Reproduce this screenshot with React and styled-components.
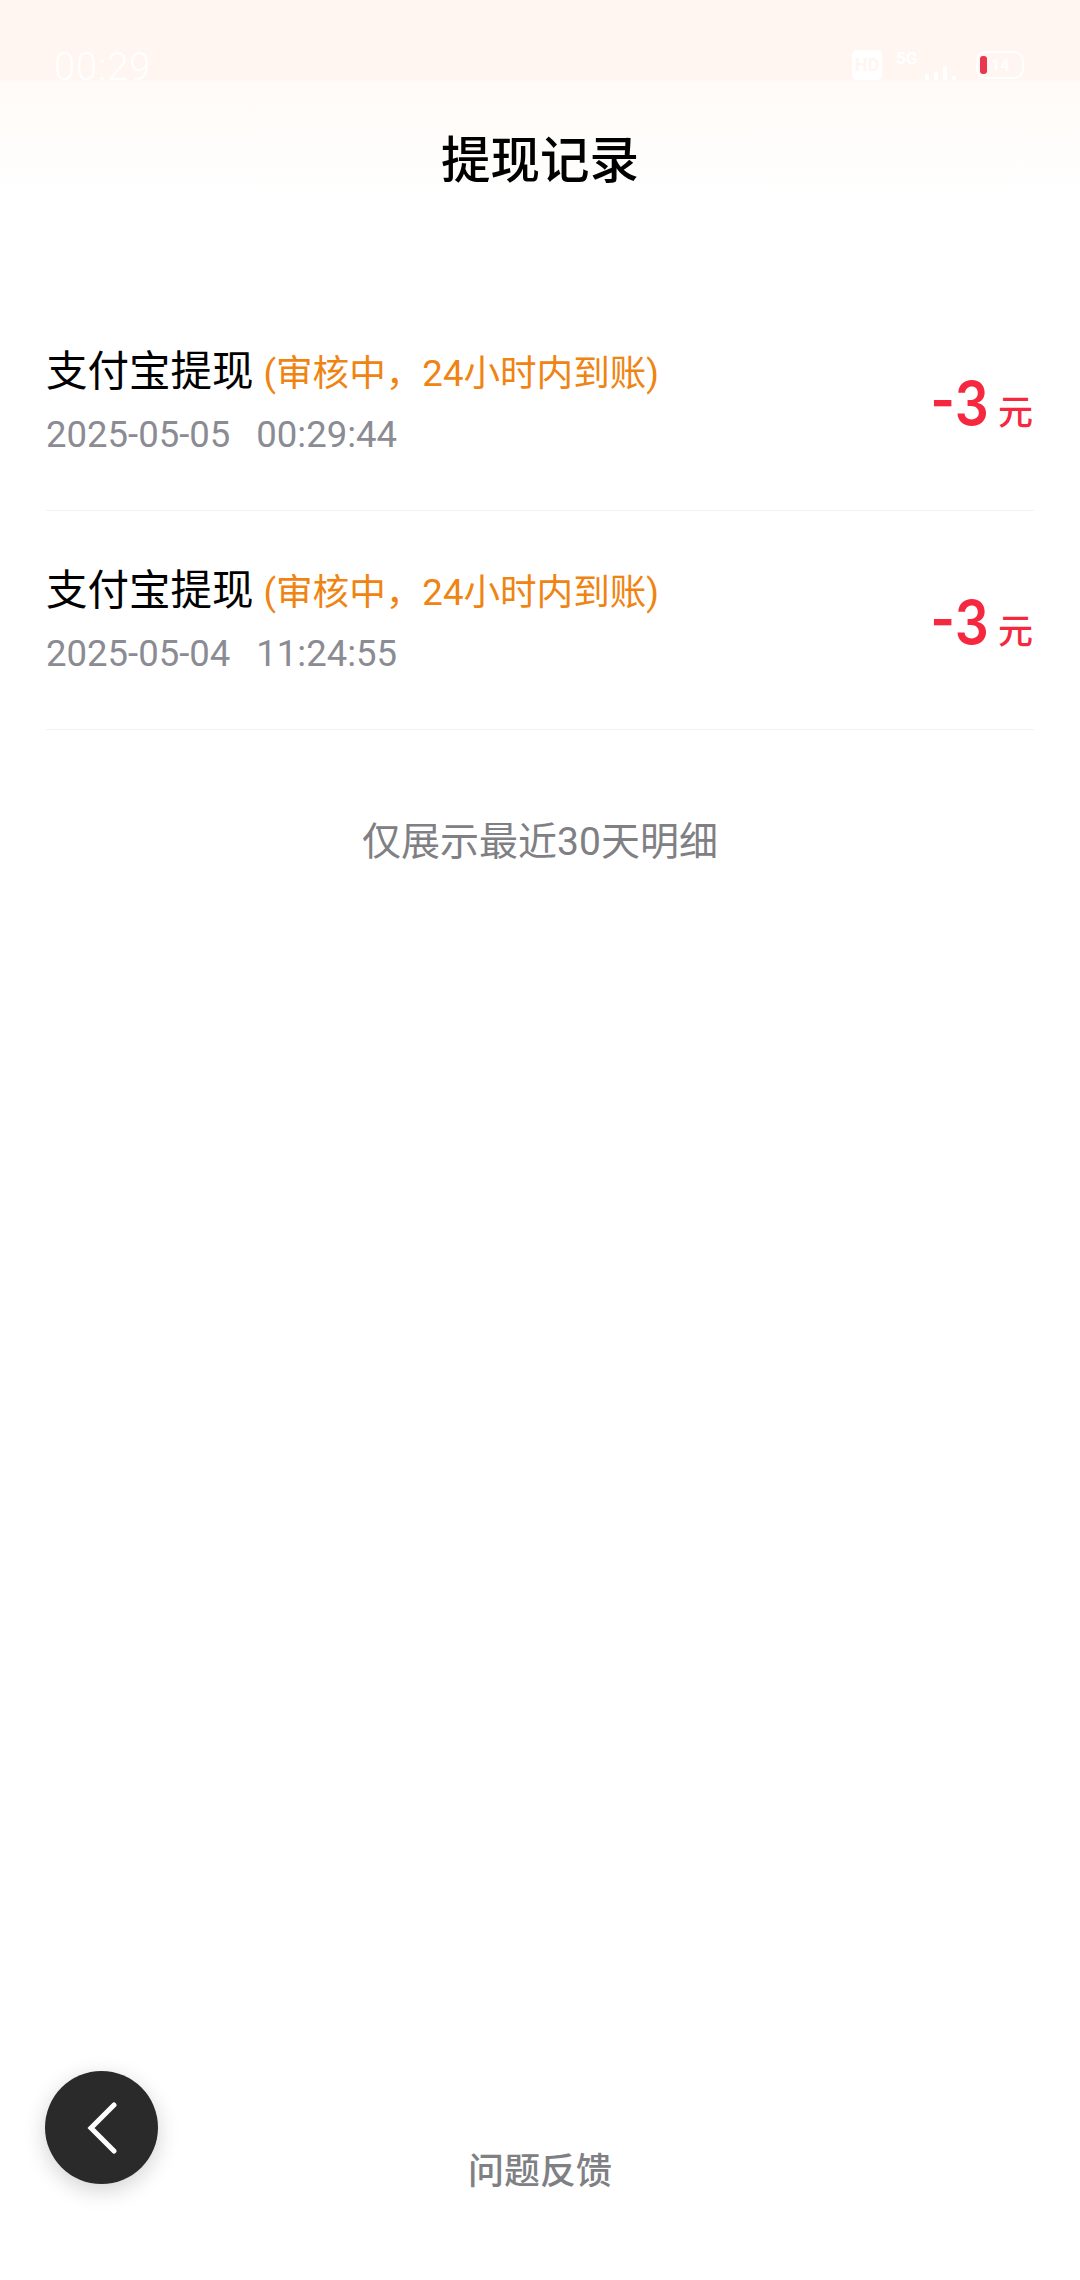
import React from 'react'
import styled, { createGlobalStyle } from 'styled-components'

const cjk = `Roboto, "Noto Sans CJK SC", sans-serif`

const GlobalStyle = createGlobalStyle`
  html, body {
    margin: 0;
    padding: 0;
    background: #fff;
  }
  body {
    font-family: ${cjk};
  }
`

const Page = styled.div`
  width: 1080px;
  height: 2280px;
  display: flex;
  flex-direction: column;
  position: relative;
  overflow: hidden;
  background: #fff;
`

const Header = styled.header`
  height: 200px;
  background: linear-gradient(180deg, #fff5f1 0%, #fff6f2 40%, #fffaf7 41%, #ffffff 100%);
  display: flex;
  flex-direction: column;
`

const StatusBar = styled.div`
  height: 80px;
  padding: 47px 56px 0 54px;
  box-sizing: border-box;
  display: flex;
  justify-content: space-between;
  align-items: flex-start;
  color: #fff;
`

const Clock = styled.span`
  font-size: 38px;
  font-weight: 300;
  line-height: 40px;
  letter-spacing: 1px;
`

const StatusIcons = styled.div`
  display: flex;
  align-items: center;
  gap: 12px;
  margin-top: 3px;
  margin-right: 0;
`

const HdBadge = styled.span`
  width: 30px;
  height: 30px;
  border-radius: 5px;
  background: #fff;
  color: #fff5f1;
  font-size: 18px;
  font-weight: 700;
  line-height: 30px;
  text-align: center;
`

const Signal = styled.div`
  width: 62px;
  height: 30px;
  position: relative;
  display: flex;
  gap: 5px;
  align-items: flex-end;
  justify-content: flex-end;
`

const NetLabel = styled.span`
  position: absolute;
  left: 2px;
  top: 0;
  font-size: 17px;
  line-height: 17px;
  font-weight: 700;
  color: #fff;
`

const Bar = styled.i`
  width: 4px;
  height: ${({ h }) => h}px;
  background: #fff;
`

const Battery = styled.div`
  width: 48px;
  height: 28px;
  margin-left: 8px;
  border: 2px solid #fff;
  border-radius: 10px;
  box-sizing: border-box;
  display: flex;
  align-items: center;
  gap: 4px;
  padding-left: 2px;
  color: #fff;
  font-size: 16px;
  font-weight: 700;
`

const BatteryLevel = styled.i`
  width: 7px;
  height: 18px;
  border-radius: 3px;
  background: #e8384f;
`

const Title = styled.h1`
  margin: 43px 0 0;
  height: 77px;
  font-size: 49.5px;
  font-weight: 500;
  line-height: 77px;
  text-align: center;
  color: #000;
`

const List = styled.main`
  margin: 0 46px;
  padding-top: 92px;
`

const Row = styled.div`
  height: 219px;
  box-sizing: border-box;
  border-bottom: 1px solid #f1f1f3;
  display: flex;
  align-items: center;
  justify-content: space-between;
`

const RowText = styled.div`
  display: flex;
  flex-direction: column;
  gap: 13px;
`

const RowTitle = styled.div`
  font-size: 41.5px;
  line-height: 52px;
  color: #000;
  white-space: nowrap;
`

const Status = styled.span`
  font-size: 36.6px;
  color: #ef8412;
  margin-left: 10px;
`

const RowDate = styled.div`
  font-size: 36.5px;
  line-height: 44px;
  color: #8a8b93;
  word-spacing: 17px;
`

const Amount = styled.div`
  display: flex;
  align-items: baseline;
  gap: 9px;
  color: #f5283f;
  margin-top: 6px;
  margin-right: 1px;
`

const AmountValue = styled.span`
  display: inline-block;
  transform: scaleX(0.89);
  transform-origin: right center;
  font-family: "Inter", ${cjk};
  font-size: 60px;
  font-weight: 600;
  line-height: 60px;
`

const Unit = styled.span`
  font-size: 35px;
  font-weight: 500;
`

const Note = styled.p`
  margin: 85px 0 0;
  text-align: center;
  font-size: 39px;
  line-height: 54px;
  color: #808084;
`

const Feedback = styled.div`
  position: absolute;
  left: 0;
  right: 0;
  bottom: 0;
  padding-bottom: 81px;
  text-align: center;
  font-size: 36px;
  font-weight: 500;
  line-height: 54px;
  color: #808084;
`

const BackButton = styled.button`
  position: absolute;
  left: 45px;
  top: 2071px;
  width: 113px;
  height: 113px;
  padding: 0;
  border: none;
  border-radius: 50%;
  background: #2a2a2a;
  box-shadow: 0 6px 22px rgba(0, 0, 0, 0.18);
  display: flex;
  align-items: center;
  justify-content: center;
`

const records = [
  { date: '2025-05-05 00:29:44' },
  { date: '2025-05-04 11:24:55' },
]

export default function App() {
  return (
    <Page>
      <GlobalStyle />
      <Header>
        <StatusBar>
          <Clock>00:29</Clock>
          <StatusIcons>
            <HdBadge>HD</HdBadge>
            <Signal>
              <NetLabel>5G</NetLabel>
              <Bar h={6} />
              <Bar h={8} />
              <Bar h={14} />
              <Bar h={4} />
            </Signal>
            <Battery>
              <BatteryLevel />
              14
            </Battery>
          </StatusIcons>
        </StatusBar>
        <Title>提现记录</Title>
      </Header>
      <List>
        {records.map((r) => (
          <Row key={r.date}>
            <RowText>
              <RowTitle>
                支付宝提现<Status>(审核中，24小时内到账)</Status>
              </RowTitle>
              <RowDate>{r.date}</RowDate>
            </RowText>
            <Amount>
              <AmountValue>-3</AmountValue>
              <Unit>元</Unit>
            </Amount>
          </Row>
        ))}
        <Note>仅展示最近30天明细</Note>
      </List>
      <Feedback>问题反馈</Feedback>
      <BackButton aria-label="back">
        <svg width="40" height="52" viewBox="0 0 40 52" fill="none">
          <path d="M32 3 L9 26 L32 49" stroke="#fff" strokeWidth="5" strokeLinecap="round" />
        </svg>
      </BackButton>
    </Page>
  )
}
